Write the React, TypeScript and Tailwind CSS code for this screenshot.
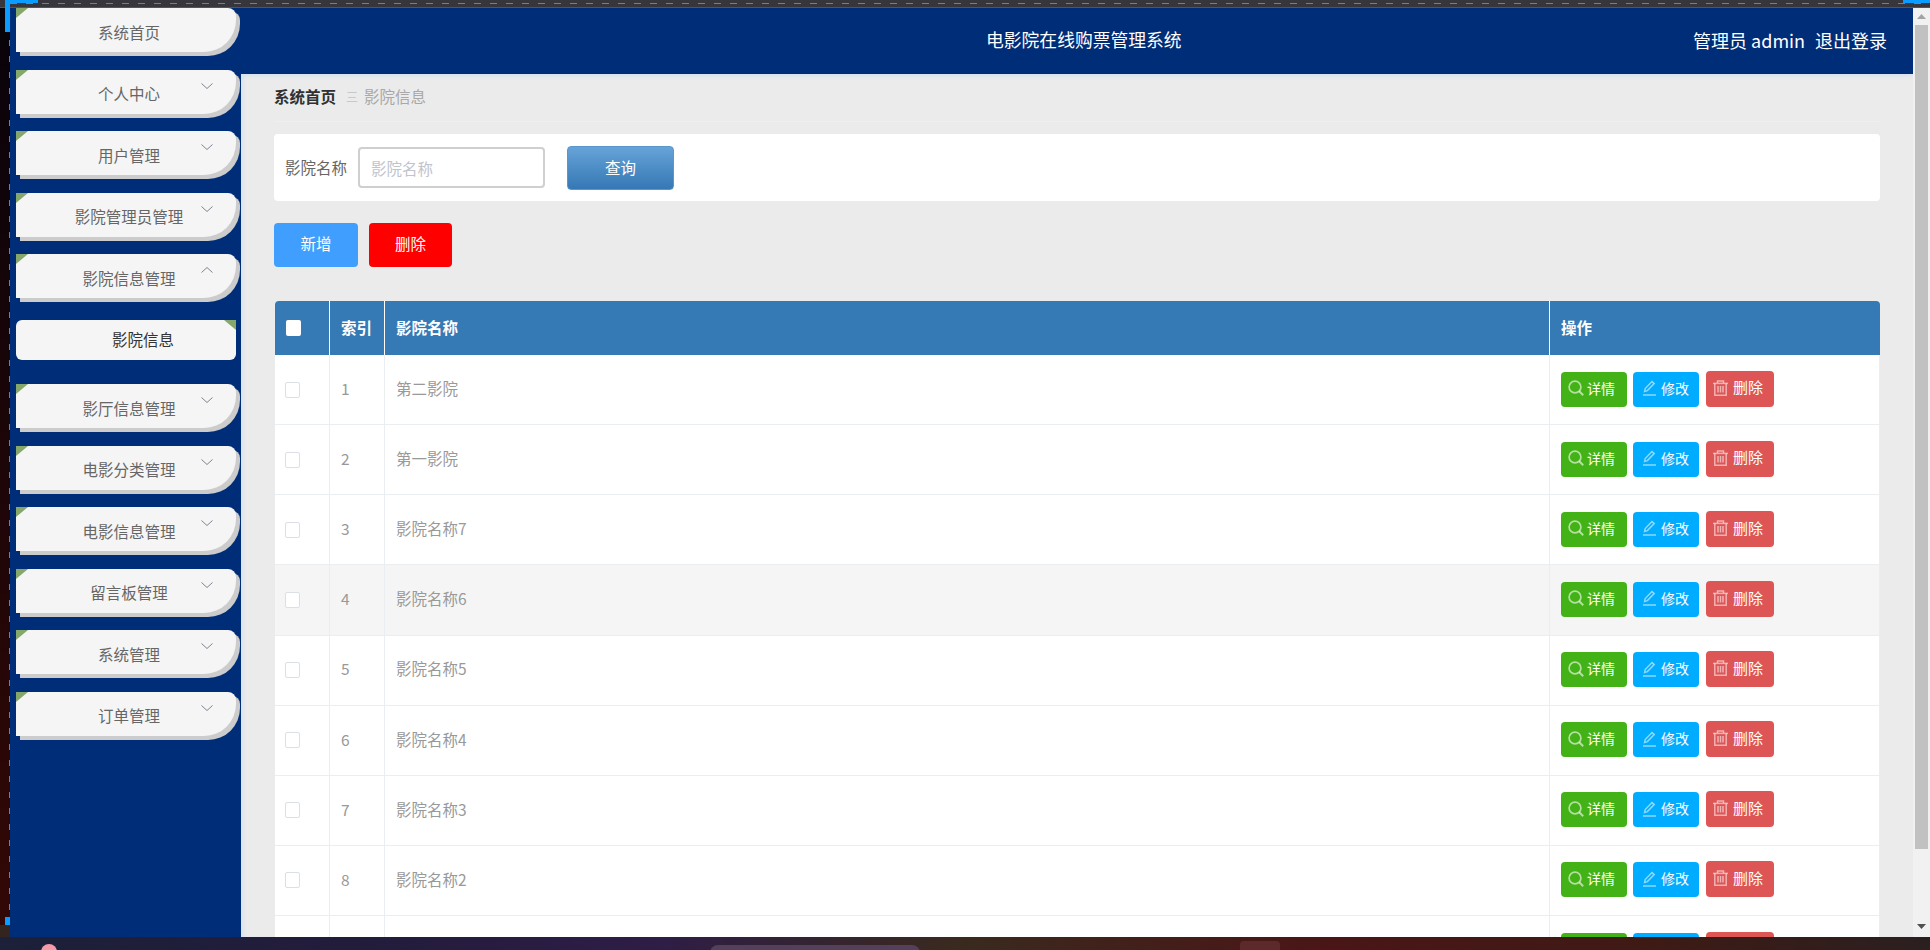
const font = "[font-family:'Noto_Sans_CJK_SC','Liberation_Sans',sans-serif]";

function Chevron({ up }: { up?: boolean }) {
  return (
    <svg className="absolute right-[23px] top-[13px]" width="12" height="6" viewBox="0 0 12 6" fill="none" stroke="#7f8590" strokeWidth="1">
      <path d={up ? "M0.5 5.5L6 0.5L11.5 5.5" : "M0.5 0.5L6 5.5L11.5 0.5"} />
    </svg>
  );
}

function MenuItem({ label, arrow }: { label: string; arrow?: "up" | "down" }) {
  return (
    <div className="relative mb-[17.5px] flex h-[44px] w-[220px] items-center justify-center rounded-tr-[8px] rounded-br-[32px] bg-[#f5f5f5] pt-[5px] pl-[6px] text-[15.5px] text-[#666] shadow-[4px_4px_0_#cccccc]">
      <span className="absolute left-0 top-0 h-0 w-0 border-t-[10px] border-r-[12px] border-t-[#86a76b] border-r-transparent" />
      {label}
      {arrow && <Chevron up={arrow === "up"} />}
    </div>
  );
}

function SearchIcon() {
  return (
    <svg width="16" height="16" viewBox="0 0 16 16" fill="none" stroke="#ffffff" strokeOpacity="0.6" strokeWidth="1.7">
      <circle cx="7" cy="7" r="5.9" />
      <path d="M11.2 11.2L15.2 15.2" strokeWidth="2" />
    </svg>
  );
}

function EditIcon() {
  return (
    <svg width="13" height="16" viewBox="0 0 13 16" fill="none" stroke="#ffffff" strokeOpacity="0.55" strokeWidth="1.5">
      <path d="M1.6 11.5L2.2 8.6L9 1.6L11.2 3.6L4.4 10.6Z" />
      <path d="M0 15H13" />
    </svg>
  );
}

function TrashIcon() {
  return (
    <svg width="15" height="16" viewBox="0 0 15 16" fill="none" stroke="#ffffff" strokeOpacity="0.55" strokeWidth="1.5">
      <path d="M0 3.4H15" />
      <path d="M4.5 3V1H10.5V3" />
      <path d="M1.8 3.4V15.2H13.2V3.4" />
      <path d="M5 6V12.5M7.5 6V12.5M10 6V12.5" />
    </svg>
  );
}

const rows = ["第二影院", "第一影院", "影院名称7", "影院名称6", "影院名称5", "影院名称4", "影院名称3", "影院名称2", "影院名称1"];

function Row({ index, name }: { index: number; name: string }) {
  const cell = "border-r border-b border-[#ebeef0]";
  return (
    <tr className={`h-[70.14px] ${index === 4 ? "bg-[#f5f5f5]" : "bg-white"}`}>
      <td className={`${cell} pl-[10px]`}>
        <span className="block h-[16px] w-[15px] rounded-[2px] border border-[#dcdfe6] bg-white" />
      </td>
      <td className={`${cell} pl-[11px] pb-[2px] text-[#999]`}>{index}</td>
      <td className={`${cell} pl-[11px] pb-[2px] text-[#999]`}>{name}</td>
      <td className={`${cell} pl-[11px]`}>
        <div className="flex items-end pb-[2px] text-white">
          <span className="flex h-[35px] w-[66px] items-center rounded-[4px] bg-[#43b216] pl-[7px] pb-[2px] text-[14px]">
            <SearchIcon />
            <span className="ml-[3px]">详情</span>
          </span>
          <span className="ml-[6px] flex h-[35px] w-[66px] items-center rounded-[4px] bg-[#00acff] pl-[10px] pb-[2px] text-[14px]">
            <EditIcon />
            <span className="ml-[5px]">修改</span>
          </span>
          <span className="ml-[7px] flex h-[36px] w-[68px] items-center rounded-[4px] bg-[#dd5555] pl-[7px] pb-[2px] text-[15px]">
            <TrashIcon />
            <span className="ml-[5px]">删除</span>
          </span>
        </div>
      </td>
    </tr>
  );
}

export default function App() {
  const head = "border-r border-white pl-[11px] pb-[1px] text-left font-bold text-white";
  return (
    <div className={`flex h-[950px] w-[1930px] flex-col overflow-hidden bg-black text-[15.5px] ${font}`}>
      {/* window chrome, top */}
      <div className="relative h-[8px] shrink-0 border-b border-[#555] bg-[#36363c]">
        <div className="absolute left-[10px] right-0 top-[3px] h-px bg-[repeating-linear-gradient(90deg,#1c9be0_0,#1c9be0_7px,transparent_7px,transparent_16px)]" />
        <div className="absolute left-[5px] top-0 h-[3px] w-[33px] bg-[#0a9dff]" />
        <div className="absolute right-0 top-0 h-[3px] w-[27px] bg-[#0a9dff]" />
      </div>

      <div className="flex min-h-0 flex-1">
        {/* desktop strip at the left */}
        <div className="relative w-[10px] shrink-0 bg-[linear-gradient(180deg,#07030a,#330805)]">
          <div className="absolute right-0 top-0 h-full w-px bg-[repeating-linear-gradient(180deg,#1c9be0_0,#1c9be0_6px,transparent_6px,transparent_16px)]" />
          <div className="absolute left-[5px] top-[-8px] h-[32px] w-[5px] bg-[#0a9dff]" />
          <div className="absolute left-[5px] top-[909px] h-[8px] w-[5px] bg-[#0a9dff]" />
          <div className="absolute left-0 top-[917px] h-[12px] w-[10px] bg-[#33241f]" />
        </div>

        {/* sidebar */}
        <aside className="w-[231px] shrink-0 bg-[#002d78] pl-[6px]">
          <MenuItem label="系统首页" />
          <MenuItem label="个人中心" arrow="down" />
          <MenuItem label="用户管理" arrow="down" />
          <MenuItem label="影院管理员管理" arrow="down" />
          <MenuItem label="影院信息管理" arrow="up" />
          <div className="relative mb-[24px] mt-[22px] flex h-[40px] w-[220px] items-center justify-center rounded-[6px] bg-[#f5f5f5] pb-[1px] pl-[34px] text-[15.5px] text-[#333]">
            <span className="absolute right-0 top-0 h-0 w-0 border-t-[10px] border-l-[12px] border-t-[#86a76b] border-l-transparent" />
            影院信息
          </div>
          <MenuItem label="影厅信息管理" arrow="down" />
          <MenuItem label="电影分类管理" arrow="down" />
          <MenuItem label="电影信息管理" arrow="down" />
          <MenuItem label="留言板管理" arrow="down" />
          <MenuItem label="系统管理" arrow="down" />
          <MenuItem label="订单管理" arrow="down" />
        </aside>

        {/* main */}
        <main className="flex min-w-0 flex-1 flex-col overflow-hidden bg-[#ebebeb] shadow-[inset_4px_0_4px_-2px_#d5e0f0]">
          <header className="relative flex h-[66px] shrink-0 items-center bg-[#002d78] text-[18px] text-white shadow-[0_2px_4px_#d5e0f0]">
            <div className="absolute left-[745px] top-[18px] text-[17.8px]">电影院在线购票管理系统</div>
            <div className="ml-auto flex pb-[2px] pr-[26px]">
              <span>管理员 admin</span>
              <span className="ml-[10px]">退出登录</span>
            </div>
          </header>

          <div className="flex-1 pl-[33px] pr-[33px]">
            <nav className="flex h-[48px] items-center border-b border-[#efefef] pb-[2px]">
              <span className="font-bold text-[#303133]">系统首页</span>
              <span className="ml-[10px] text-[12px] text-[#c8c8c8]">三</span>
              <span className="ml-[6px] text-[#a8a8a8]">影院信息</span>
            </nav>

            <section className="mt-[12px] flex h-[67px] items-center rounded-[4px] bg-white pl-[11px]">
              <span className="text-[#666]">影院名称</span>
              <input
                readOnly
                placeholder="影院名称"
                className="ml-[11px] h-[41px] w-[187px] rounded-[4px] border-2 border-[#cfcfcf] bg-white pl-[11px] text-[15.5px] outline-none placeholder:text-[#c0c4cc]"
              />
              <button className="ml-[22px] h-[44px] w-[107px] rounded-[4px] border border-[#5c97cc] bg-[linear-gradient(180deg,#66a3d8,#3578b5)] text-[15.5px] text-white">
                查询
              </button>
            </section>

            <div className="mt-[22px] flex gap-[11px] text-[15.5px] text-white">
              <button className="h-[44px] w-[84px] rounded-[4px] bg-[#409eff] pb-[2px]">新增</button>
              <button className="h-[44px] w-[83px] rounded-[4px] bg-[#ff0000] pb-[2px]">删除</button>
            </div>

            <table className="ml-px mt-[34px] w-[1605px] table-fixed border-separate border-spacing-0">
              <colgroup>
                <col className="w-[55px]" />
                <col className="w-[55px]" />
                <col className="w-[1165px]" />
                <col className="w-[330px]" />
              </colgroup>
              <thead>
                <tr className="h-[54px] bg-[#3579b5]">
                  <th className={`${head} rounded-tl-[4px] pl-[10px]`}>
                    <span className="block h-[16px] w-[15px] rounded-[2px] bg-white" />
                  </th>
                  <th className={head}>索引</th>
                  <th className={head}>影院名称</th>
                  <th className={`${head} rounded-tr-[4px] border-r-0`}>操作</th>
                </tr>
              </thead>
              <tbody>
                {rows.map((name, i) => (
                  <Row key={name} index={i + 1} name={name} />
                ))}
              </tbody>
            </table>
          </div>
        </main>

        {/* scrollbar */}
        <div className="flex w-[17px] shrink-0 flex-col items-center bg-[#f1f1f1]">
          <svg className="mt-[6px]" width="9" height="5" viewBox="0 0 9 5"><path d="M4.5 0L9 5H0Z" fill="#a3a3a3" /></svg>
          <div className="mt-[6px] h-[824px] w-[13px] bg-[#c1c1c1]" />
          <svg className="mt-[75px]" width="9" height="5" viewBox="0 0 9 5"><path d="M0 0H9L4.5 5Z" fill="#505050" /></svg>
        </div>
      </div>

      {/* desktop taskbar behind the window */}
      <div className="relative h-[13px] shrink-0 bg-[linear-gradient(90deg,#1c2038_0%,#231c3c_20%,#2e1d46_34%,#3a2a1e_50%,#4a1616_68%,#3f1a14_85%,#2a2020_100%)]">
        <span className="absolute left-[41px] top-[7px] h-[16px] w-[16px] rounded-full bg-[#f49aa8]" />
        <span className="absolute left-[710px] top-[8px] h-[12px] w-[210px] rounded-t-[8px] bg-[#53405a]" />
        <span className="absolute left-[1240px] top-[4px] h-[12px] w-[40px] rounded-t-[4px] bg-[#5c2a2a]" />
      </div>
    </div>
  );
}
